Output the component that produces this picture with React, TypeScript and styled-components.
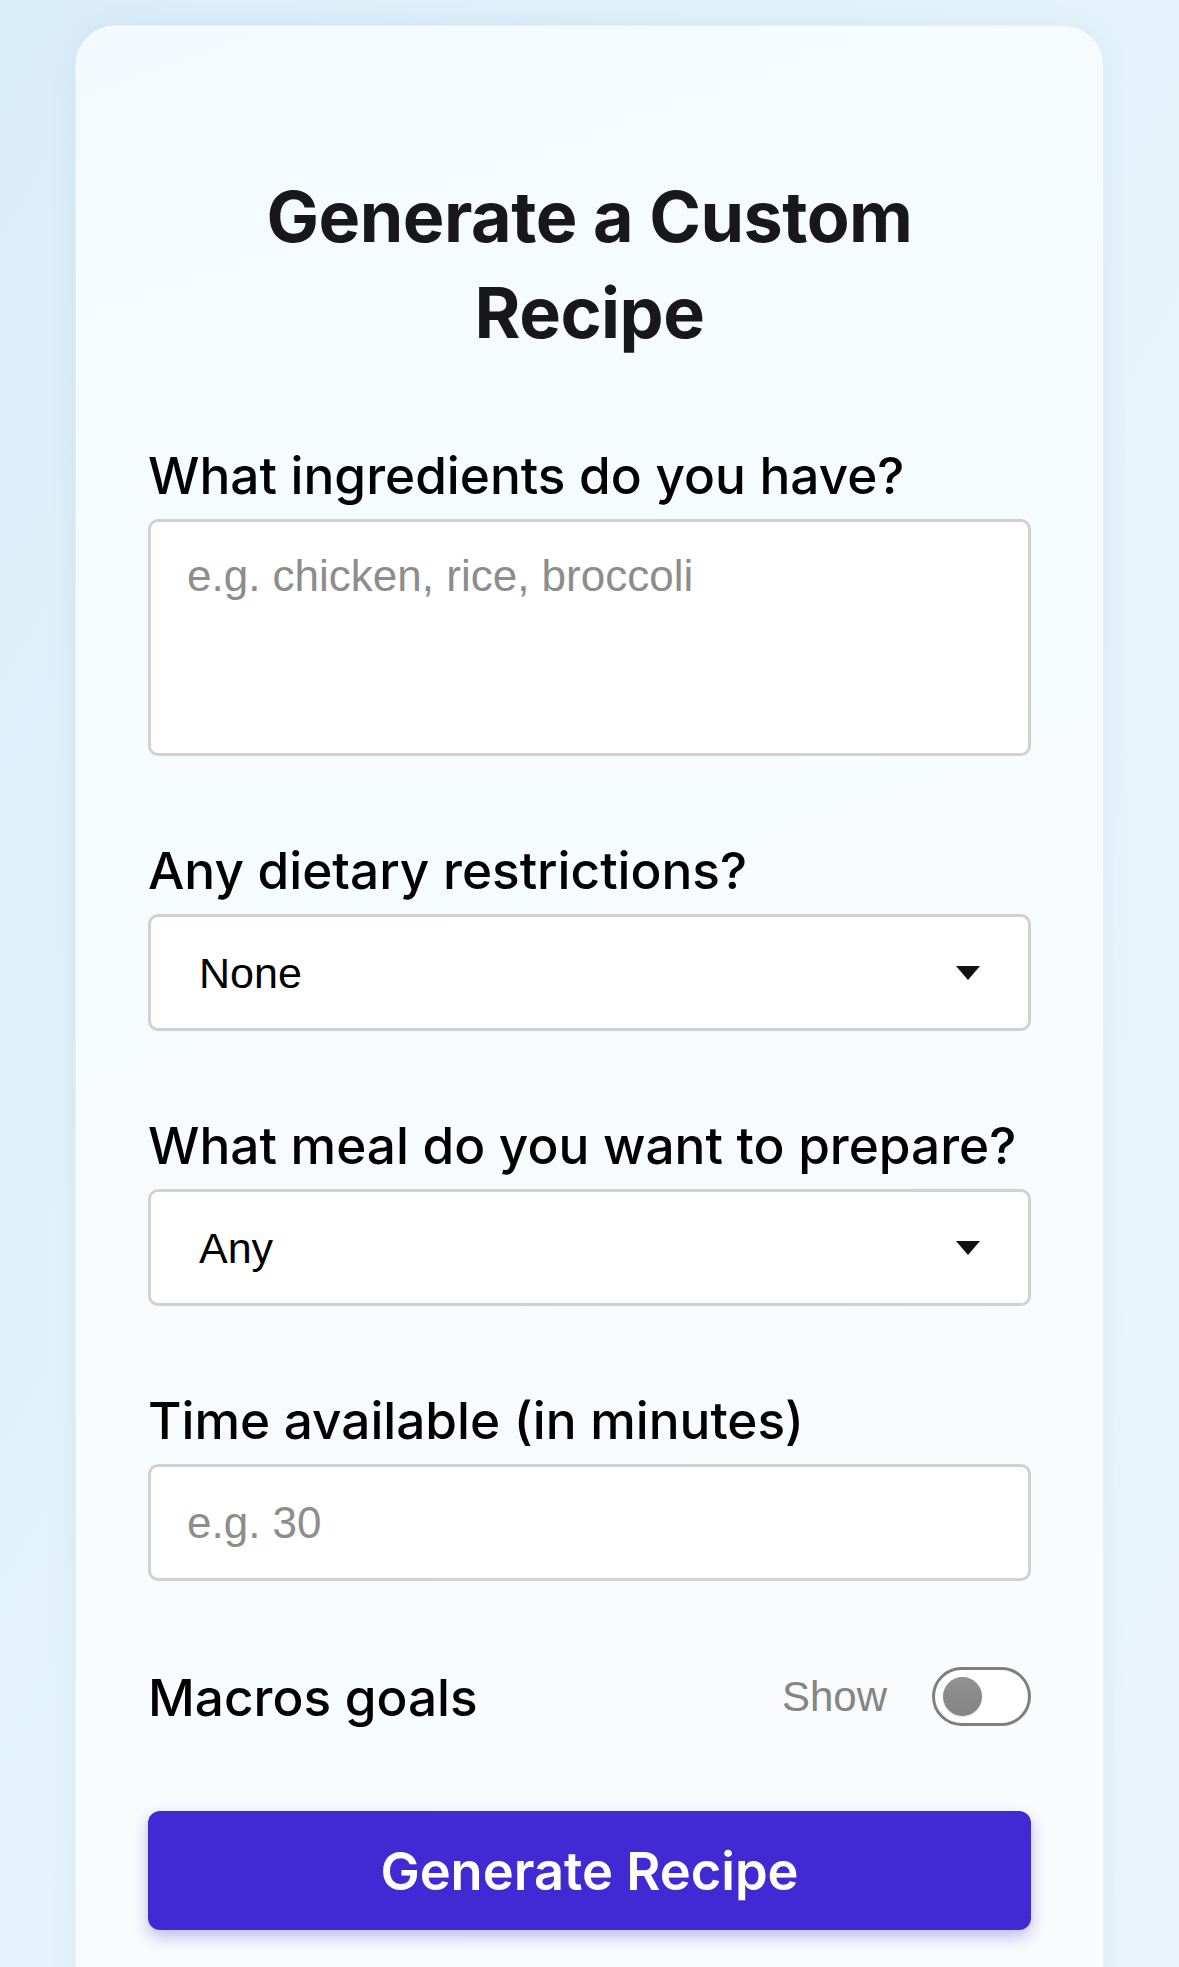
import React from "react";
import styled, { createGlobalStyle } from "styled-components";

const Global = createGlobalStyle`
  html, body { margin: 0; padding: 0; }
  body {
    background: linear-gradient(120deg, #d9edf9 0%, #e4f3fb 45%, #eaf5fb 100%);
    min-height: 1967px;
    font-family: Inter, "Noto Sans", sans-serif;
    overflow: hidden;
  }
  * { box-sizing: border-box; }
`;

const Page = styled.div`
  padding: 25px 75px 0;
  height: 1967px;
  overflow: hidden;
`;

const Card = styled.div`
  display: flex;
  flex-direction: column;
  background: linear-gradient(160deg, #f4fbfe 0%, #f8fbfd 60%, #fafbfc 100%);
  border-radius: 40px;
  padding: 143px 72px 120px;
  box-shadow: 0 0 24px rgba(120, 150, 170, 0.12);
  border: 1px solid rgba(230, 236, 240, 0.9);
`;

const Title = styled.h1`
  margin: 0 auto 81px;
  max-width: 720px;
  font-family: Inter, sans-serif;
  font-weight: 700;
  font-size: 70px;
  line-height: 96px;
  color: #17171c;
  text-align: center;
  letter-spacing: -0.5px;
`;

const Field = styled.div`
  display: flex;
  flex-direction: column;
  margin-bottom: 81px;
`;

const Label = styled.label`
  font-family: Inter, sans-serif;
  font-weight: 500;
  font-size: 51.3px;
  line-height: 66px;
  color: #000;
  margin-bottom: 11px;
`;

const boxBase = `
  width: 100%;
  background: #ffffff;
  border: 3px solid #d1d1d1;
  border-radius: 10px;
  font-family: "Liberation Sans", Arial, sans-serif;
  font-size: 44px;
  color: #111;
  outline: none;
`;

const TextArea = styled.textarea`
  ${boxBase}
  height: 237px;
  padding: 26px 36px;
  resize: none;
  line-height: 56px;
  &::placeholder { color: #8d8d8d; }
`;

const TextInput = styled.input`
  ${boxBase}
  height: 117px;
  padding: 0 36px;
  &::placeholder { color: #8d8d8d; }
`;

const SelectWrap = styled.div`
  position: relative;
  width: 100%;
`;

const Select = styled.select`
  ${boxBase}
  height: 117px;
  padding: 0 48px;
  appearance: none;
  -webkit-appearance: none;
  color: #000;
  font-size: 43px;
`;

const Arrow = styled.svg`
  position: absolute;
  right: 51px;
  top: 50%;
  width: 24px;
  height: 14px;
  transform: translateY(-50%);
  pointer-events: none;
`;

const MacrosRow = styled.div`
  display: flex;
  align-items: center;
  justify-content: space-between;
  margin-top: 5px;
  margin-bottom: 85px;
  height: 59px;
`;

const RowLabel = styled.span`
  font-family: Inter, sans-serif;
  font-weight: 500;
  font-size: 51.3px;
  color: #000;
`;

const ToggleGroup = styled.div`
  display: flex;
  align-items: center;
  gap: 45px;
`;

const ShowText = styled.span`
  font-family: "Liberation Sans", Arial, sans-serif;
  font-size: 42px;
  color: #858585;
`;

const Toggle = styled.button<{ $on: boolean }>`
  width: 99px;
  height: 59px;
  border-radius: 30px;
  border: 3px solid #7f7f7f;
  background: ${(p) => (p.$on ? "#4129d4" : "#ffffff")};
  padding: 0 0 0 8px;
  display: flex;
  align-items: center;
  cursor: pointer;
`;

const Knob = styled.span`
  width: 39px;
  height: 39px;
  border-radius: 50%;
  background: linear-gradient(180deg, #939393 0%, #8a8a8a 45%, #858585 100%);
  box-shadow: 0 1px 2px rgba(0, 0, 0, 0.15);
`;

const Button = styled.button`
  width: 100%;
  height: 119px;
  flex-shrink: 0;
  border: none;
  border-radius: 12px;
  background: #4129d4;
  color: #fff;
  font-family: Inter, sans-serif;
  font-weight: 600;
  font-size: 52.4px;
  box-shadow: 0 7px 16px rgba(65, 41, 212, 0.3);
  cursor: pointer;
`;

const Caret = () => (
  <Arrow viewBox="0 0 24 14">
    <path d="M0 0 H24 L12 14 Z" fill="#111" />
  </Arrow>
);

export default function App() {
  const [show, setShow] = React.useState(false);
  return (
    <>
      <Global />
      <Page>
        <Card>
          <Title>Generate a Custom Recipe</Title>
          <Field>
            <Label>What ingredients do you have?</Label>
            <TextArea placeholder="e.g. chicken, rice, broccoli" />
          </Field>
          <Field>
            <Label>Any dietary restrictions?</Label>
            <SelectWrap>
              <Select defaultValue="none">
                <option value="none">None</option>
                <option value="vegetarian">Vegetarian</option>
                <option value="vegan">Vegan</option>
                <option value="gluten">Gluten-free</option>
              </Select>
              <Caret />
            </SelectWrap>
          </Field>
          <Field>
            <Label>What meal do you want to prepare?</Label>
            <SelectWrap>
              <Select defaultValue="any">
                <option value="any">Any</option>
                <option value="breakfast">Breakfast</option>
                <option value="lunch">Lunch</option>
                <option value="dinner">Dinner</option>
              </Select>
              <Caret />
            </SelectWrap>
          </Field>
          <Field>
            <Label>Time available (in minutes)</Label>
            <TextInput placeholder="e.g. 30" />
          </Field>
          <MacrosRow>
            <RowLabel>Macros goals</RowLabel>
            <ToggleGroup>
              <ShowText>Show</ShowText>
              <Toggle $on={show} onClick={() => setShow(!show)} aria-label="Show macros">
                <Knob />
              </Toggle>
            </ToggleGroup>
          </MacrosRow>
          <Button>Generate Recipe</Button>
        </Card>
      </Page>
    </>
  );
}
